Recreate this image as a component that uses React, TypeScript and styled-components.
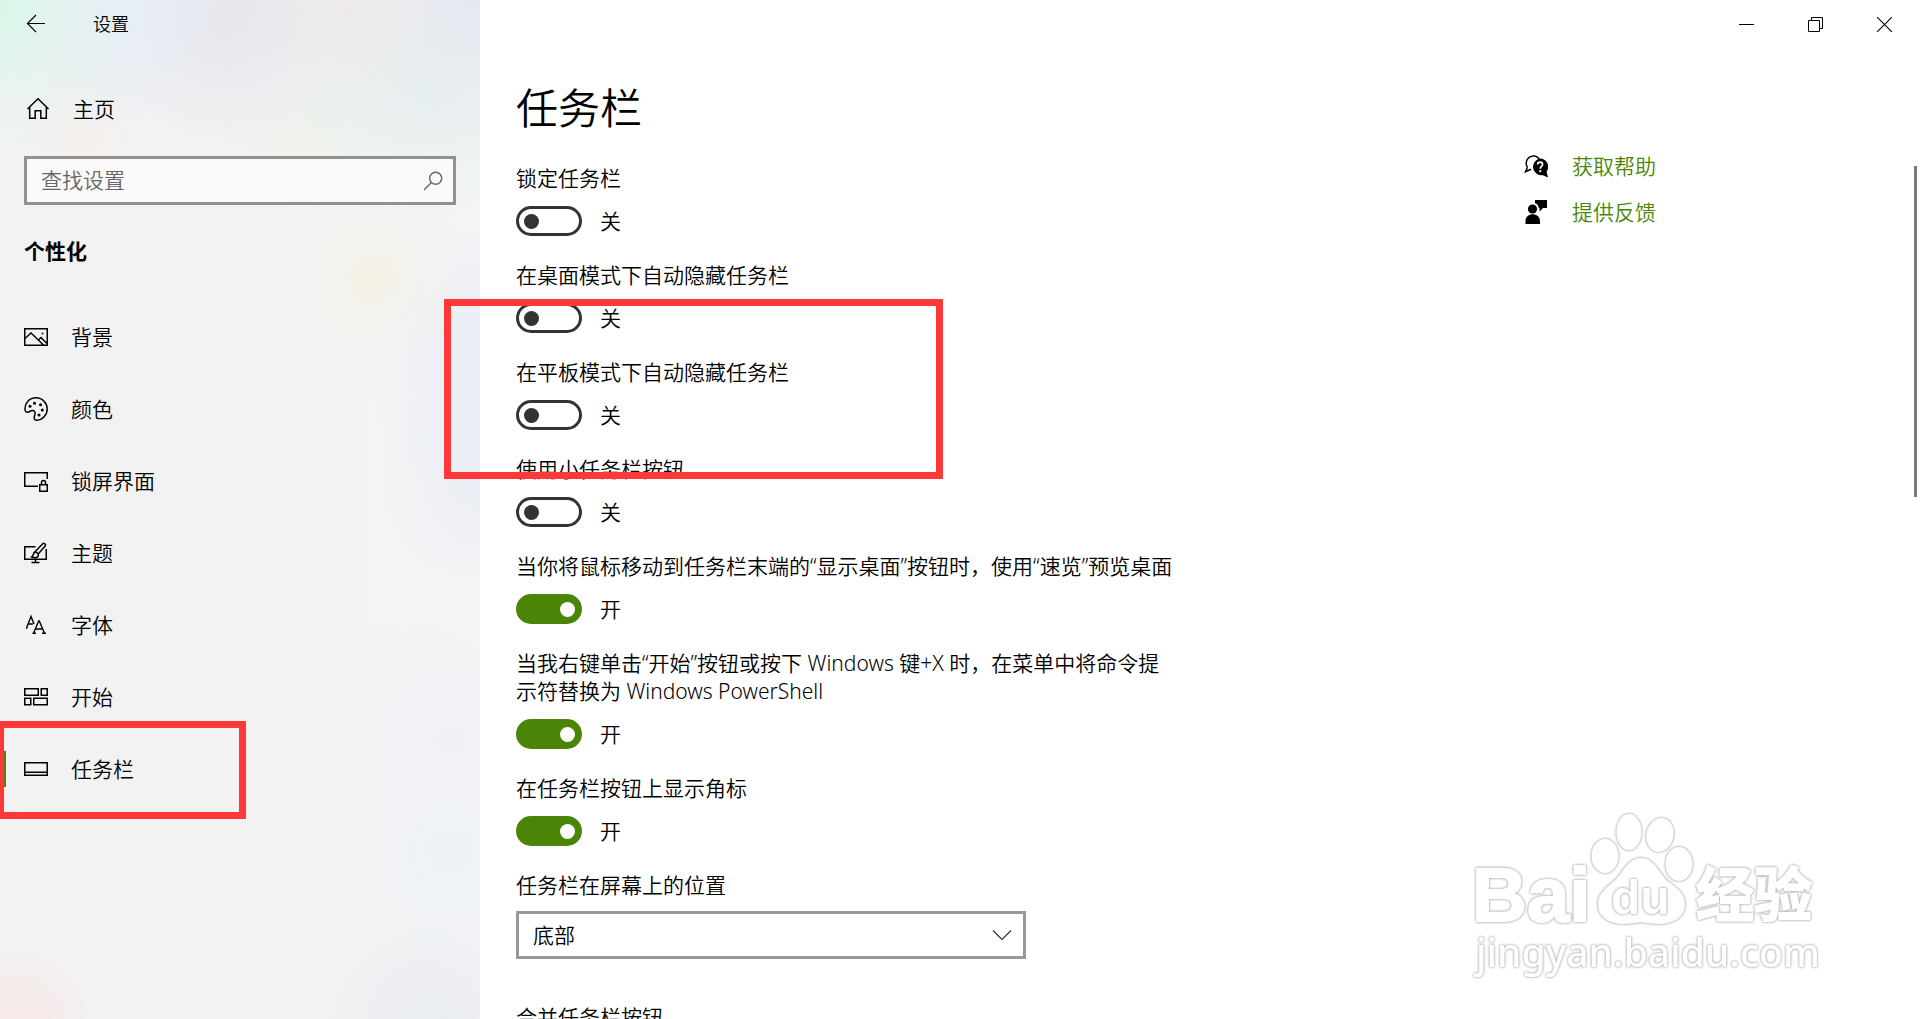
import React, { useState } from "react";
import styled, { createGlobalStyle } from "styled-components";

const GlobalStyle = createGlobalStyle`
  *, *::before, *::after { box-sizing: border-box; }
  body {
    margin: 0;
    overflow: hidden;
    background: #fff;
    color: #000;
    font-family: "Noto Sans", "Open Sans", "Noto Sans CJK SC", sans-serif;
    font-size: 21px;
    line-height: 28px;
    font-weight: 350;
  }
  button, input, select { font: inherit; color: inherit; }
`;

const Window = styled.div`
  position: relative;
  display: flex;
  height: 100vh;
  overflow: hidden;
`;

const Sidebar = styled.aside`
  flex: none;
  width: 480px;
  background:
    radial-gradient(circle at 0 10px, #d9f6e8 0, #e4f5ed88 80px, #dcf5e900 160px),
    radial-gradient(circle at 110px 10px, #e6ebf9 0, #e6eaf900 120px),
    radial-gradient(circle at 215px 20px, #e5e6ebcc 0, #e4e5eb00 120px),
    radial-gradient(circle at 345px 10px, #ede9e9 0, #efe9e900 100px),
    radial-gradient(circle at 470px 0, #e4e8f0 0, #e4e8f000 160px),
    radial-gradient(circle at 420px 80px, #e7f0ee 0, #e7f0ee00 150px),
    radial-gradient(circle at 260px 0, #e9ebf0 0, #e9ebf000 160px),
    radial-gradient(circle at 80px 140px, #f6efeccc 0, #f7efeb00 70px),
    radial-gradient(circle at 310px 135px, #f0f3e8cc 0, #f0f3e800 80px),
    radial-gradient(circle at 372px 278px, #f4f0e1 0, #f3f1e988 35px, #f5f0e000 100px),
    radial-gradient(ellipse at 480px 360px, #e9edf7 0, #e9edf600 110px),
    radial-gradient(ellipse at 480px 480px, #ebeef5 0, #e9edf500 100px),
    radial-gradient(circle at 450px 740px, #eff1f5 0, #eef0f500 140px),
    radial-gradient(circle at 450px 850px, #edf1f6 0, #ecf0f600 110px),
    radial-gradient(circle at 430px 1019px, #e9ecf1 0, #e9ecf100 120px),
    radial-gradient(circle at 20px 1019px, #f8e8e8 0, #f8e8e800 80px),
    linear-gradient(90deg, #f2f2f2 240px, #f3f4f5);
`;

const TitleRow = styled.header`
  display: flex;
  align-items: center;
  gap: 45px;
  height: 48px;
  padding-left: 24px;
  font-size: 18px;
`;

const IconButton = styled.button`
  display: flex;
  align-items: center;
  justify-content: center;
  padding: 0;
  border: 0;
  background: none;
`;

const HomeLink = styled.a`
  display: flex;
  align-items: center;
  gap: 23px;
  margin-top: 36px;
  height: 50px;
  padding-left: 26px;
  color: inherit;
  text-decoration: none;
`;

const SearchBox = styled.label`
  display: flex;
  align-items: center;
  height: 49px;
  margin: 22px 24px 0;
  padding: 0 10px 0 14px;
  border: 3px solid #919191;
  background: #ffffff99;
`;

const SearchInput = styled.input`
  flex: 1;
  min-width: 0;
  padding: 0 0 2px;
  border: 0;
  outline: 0;
  background: none;
  &::placeholder { color: #666; opacity: 1; }
`;

const SectionTitle = styled.h2`
  margin: 32px 0 36px 24px;
  font-size: 21px;
  line-height: 28px;
  font-weight: 700;
`;

const NavItem = styled.a<{ $active?: boolean }>`
  display: flex;
  align-items: center;
  gap: 23px;
  height: 72px;
  padding-left: 18px;
  border-left: 6px solid transparent;
  border-image: ${(p) =>
    p.$active
      ? "linear-gradient(transparent 18px, #4a8508 18px 54px, transparent 54px) 0 0 0 6"
      : "none"};
  color: inherit;
  text-decoration: none;
`;

const Main = styled.main`
  flex: 1;
  min-width: 0;
  display: flex;
  flex-direction: column;
`;

const Caption = styled.div`
  flex: none;
  display: flex;
  justify-content: flex-end;
  height: 48px;
  padding-right: 1px;
`;

const CaptionButton = styled(IconButton)`
  width: 69px;
`;

const Columns = styled.div`
  display: flex;
  justify-content: space-between;
  padding-left: 36px;
`;

const Settings = styled.div`
  flex: 0 1 664px;
  display: flex;
  flex-direction: column;
  gap: 25px;
`;

const PageTitle = styled.h1`
  margin: 32px 0 3px;
  font-size: 42px;
  line-height: 56px;
  font-weight: inherit;
`;

const Setting = styled.div`
  display: flex;
  flex-direction: column;
  align-items: flex-start;
  gap: 14px;
`;

const SwitchRow = styled.div`
  display: flex;
  align-items: center;
  gap: 18px;
  height: 30px;
`;

const Switch = styled.input`
  appearance: none;
  display: flex;
  align-items: center;
  width: 66px;
  height: 30px;
  margin: 0;
  padding: 0 5px;
  border: 3px solid #333;
  border-radius: 15px;
  &::before {
    content: "";
    width: 15px;
    height: 15px;
    border-radius: 50%;
    background: #333;
  }
  &:checked {
    justify-content: flex-end;
    padding: 0 4px;
    border-color: #4a8508;
    background: #4a8508;
  }
  &:checked::before { background: #fff; }
`;

const SelectSetting = styled(Setting)`
  gap: 12px;
  margin-bottom: 19px;
`;

const SelectBox = styled.div`
  display: grid;
  align-items: center;
  width: 510px;
  max-width: 100%;
  & > * { grid-area: 1 / 1; }
  & > svg { justify-self: end; margin-right: 14px; pointer-events: none; }
`;

const Select = styled.select`
  appearance: none;
  width: 100%;
  height: 48px;
  padding: 0 48px 0 14px;
  border: 3px solid #999;
  border-radius: 0;
  background: #fff;
`;

const HelpLinks = styled.nav`
  flex: none;
  width: 396px;
  display: flex;
  flex-direction: column;
  gap: 18px;
  padding-top: 104px;
`;

const HelpLink = styled.a`
  display: flex;
  align-items: center;
  gap: 24px;
  color: #4a8508;
  text-decoration: none;
`;

const ScrollThumb = styled.div`
  position: absolute;
  top: 166px;
  right: 3px;
  width: 3px;
  height: 331px;
  background: #7a7a7a;
`;

const Highlight = styled.div<{ $x: number; $y: number; $w: number; $h: number }>`
  position: absolute;
  left: ${(p) => p.$x}px;
  top: ${(p) => p.$y}px;
  width: ${(p) => p.$w}px;
  height: ${(p) => p.$h}px;
  border: 7px solid #fc3838;
  pointer-events: none;
`;

const Watermark = styled.svg`
  position: absolute;
  right: 80px;
  bottom: 29px;
  overflow: visible;
  pointer-events: none;
  font-family: "Noto Sans", "Noto Sans CJK SC", sans-serif;
  font-weight: 700;
  & > * { filter: drop-shadow(0 0 1px #aaa) drop-shadow(0 0 1px #ccc); }
`;

const Glyph = ({ size = 24, w = 1.5, children }: { size?: number; w?: number; children: React.ReactNode }) => (
  <svg width={size} height={size} viewBox={`0 0 ${size} ${size}`} fill="none" stroke="#000" strokeWidth={w} aria-hidden="true">
    {children}
  </svg>
);

const icons = {
  picture: (
    <Glyph>
      <path d="M.75 3.750h22.500v16.500H.75zM1 13.500l6-5.500 12.500 12M14 15.500l3-3 6 6" />
      <circle cx="18.500" cy="8.500" r=".9" fill="#000" stroke="none" />
    </Glyph>
  ),
  palette: (
    <Glyph>
      <path d="M1 12.500C.5 6 5.500.8 12 .8S23.200 6 23.200 12 18.500 23.200 13 23.200c-2 0-3-1-2.800-3 .3-2 1.300-3 .8-4.800-.6-2-3-2.600-4.800-1.200C4.500 15.600 1.200 16 1 12.500z" />
      <g fill="#000" stroke="none">
        <circle cx="6" cy="9.300" r="1.500" /><circle cx="10.500" cy="6.200" r="1.500" /><circle cx="16.500" cy="7.700" r="1.500" /><circle cx="18.300" cy="13" r="1.500" /><circle cx="15" cy="18" r="1.500" />
      </g>
    </Glyph>
  ),
  lock: (
    <Glyph>
      <path d="M14 17.250H.75V3.750h22.500V10M15.750 15.750h7.500v6.500h-7.500zM17.500 15.500v-2a2 2 0 0 1 4 0v2" />
    </Glyph>
  ),
  theme: (
    <Glyph>
      <path d="M11.500 5.750H.75v12.500h21.500V8M11.500 18v3.500M7.500 21.500h8" />
      <path d="M11.300 10.500L18.700 2.800c1.300-1.400 3.700.8 2.500 2.200L14.200 13M11.300 10.500l2.900 2.500c.8 3-2.200 4.700-6.400 3 2-.8 1-4.300 3.500-5.500z" />
    </Glyph>
  ),
  font: (
    <Glyph w={1.4}>
      <path d="M2.500 15L7 3.500l3 7.500M4.200 11h4.600M2 15h1.500" />
      <path d="M9.500 20.200L14.700 8h.6l5.200 12.200M11.200 16h7.200M8.500 20.300h3.500M18 20.300h4" />
    </Glyph>
  ),
  start: (
    <Glyph>
      <path d="M.75 3.750h13.500v6.500H.75zM17.250 3.750h6v6.500h-6zM.75 13.250h6v6.500h-6zM9.750 13.250h13.500v6.500H9.750z" />
    </Glyph>
  ),
  taskbar: (
    <Glyph>
      <path d="M.75 5.750h22.500v12.500H.75zM1 15.250h22" />
    </Glyph>
  ),
};

const navItems: [keyof typeof icons, string][] = [
  ["picture", "背景"],
  ["palette", "颜色"],
  ["lock", "锁屏界面"],
  ["theme", "主题"],
  ["font", "字体"],
  ["start", "开始"],
  ["taskbar", "任务栏"],
];

const switches: [string, boolean][] = [
  ["锁定任务栏", false],
  ["在桌面模式下自动隐藏任务栏", false],
  ["在平板模式下自动隐藏任务栏", false],
  ["使用小任务栏按钮", false],
  ["当你将鼠标移动到任务栏末端的“显示桌面”按钮时，使用“速览”预览桌面", true],
  ["当我右键单击“开始”按钮或按下 Windows 键+X 时，在菜单中将命令提示符替换为 Windows PowerShell", true],
  ["在任务栏按钮上显示角标", true],
];

function SwitchSetting({ id, label, initial }: { id: string; label: string; initial: boolean }) {
  const [on, setOn] = useState(initial);
  return (
    <Setting>
      <label htmlFor={id}>{label}</label>
      <SwitchRow>
        <Switch id={id} type="checkbox" role="switch" checked={on} onChange={() => setOn(!on)} />
        <span>{on ? "开" : "关"}</span>
      </SwitchRow>
    </Setting>
  );
}

export default function App() {
  return (
    <Window>
      <GlobalStyle />
      <Sidebar>
        <TitleRow>
          <IconButton aria-label="返回">
            <Glyph w={1.2}><path d="M21 11.500H3.500M12 3L3.500 11.500 12 20" /></Glyph>
          </IconButton>
          <span>设置</span>
        </TitleRow>
        <HomeLink href="#home">
          <Glyph><path d="M1.500 12L12 1.800 22.500 12M3.700 10.500v10.700h5.500v-7.500h5.600v7.500h5.500V10.500" /></Glyph>
          主页
        </HomeLink>
        <SearchBox>
          <SearchInput type="search" placeholder="查找设置" aria-label="查找设置" />
          <svg width="20" height="20" viewBox="0 0 20 20" fill="none" stroke="#666" strokeWidth="1.400" aria-hidden="true">
            <circle cx="12.700" cy="7.300" r="6" /><path d="M8.400 11.600L1 19" />
          </svg>
        </SearchBox>
        <SectionTitle>个性化</SectionTitle>
        <nav>
          {navItems.map(([icon, label]) => (
            <NavItem key={icon} href={`#${icon}`} $active={icon === "taskbar"}>
              {icons[icon]}
              {label}
            </NavItem>
          ))}
        </nav>
      </Sidebar>
      <Main>
        <Caption>
          <CaptionButton aria-label="最小化">
            <Glyph size={15} w={1}><path d="M0 7.500h15" /></Glyph>
          </CaptionButton>
          <CaptionButton aria-label="还原">
            <Glyph size={15} w={1}><path d="M.5 3.500h11v11H.5zM3.500 3.500v-3h11v11h-3" /></Glyph>
          </CaptionButton>
          <CaptionButton aria-label="关闭">
            <Glyph size={15} w={1.100}><path d="M0 0l15 15M15 0L0 15" /></Glyph>
          </CaptionButton>
        </Caption>
        <Columns>
          <Settings>
            <PageTitle>任务栏</PageTitle>
            {switches.map(([label, on], i) => (
              <SwitchSetting key={label} id={`switch-${i}`} label={label} initial={on} />
            ))}
            <SelectSetting>
              <label htmlFor="position">任务栏在屏幕上的位置</label>
              <SelectBox>
                <Select id="position" defaultValue="底部">
                  <option>底部</option>
                </Select>
                <svg width="20" height="12" viewBox="0 0 20 12" fill="none" stroke="#333" strokeWidth="1.200" aria-hidden="true">
                  <path d="M1 1.500l9 9 9-9" />
                </svg>
              </SelectBox>
            </SelectSetting>
            <Setting>合并任务栏按钮</Setting>
          </Settings>
          <HelpLinks>
            <HelpLink href="#help">
              <svg width="24" height="24" viewBox="0 0 24 24" aria-hidden="true">
                <path d="M3.500 13.400A7 7 0 1 1 15.200 5M3.500 13.200L1.500 17.800l5.500-2.600" fill="none" stroke="#000" strokeWidth="1.500" />
                <path d="M16 4.500a8.200 8.200 0 0 1 6.600 13l1.400 6-5-2.300A8.200 8.200 0 1 1 16 4.500z" />
                <path d="M13.600 10.600c0-3.400 5-3.200 5-.2 0 2-2.400 2-2.400 4.300" fill="none" stroke="#fff" strokeWidth="1.600" />
                <circle cx="16.200" cy="17.200" r="1.100" fill="#fff" />
              </svg>
              获取帮助
            </HelpLink>
            <HelpLink href="#feedback">
              <svg width="24" height="24" viewBox="0 0 24 24" aria-hidden="true">
                <circle cx="8.500" cy="9" r="4.600" />
                <path d="M1.500 24v-3c0-9 14.500-9 14.500 0v3zM11 0h12v8h-4l-3.500 3.500V8l-1-.5C14.500 5.500 13 3.800 11 3.300z" />
              </svg>
              提供反馈
            </HelpLink>
          </HelpLinks>
        </Columns>
      </Main>
      <ScrollThumb />
      <Highlight $x={444} $y={299} $w={499} $h={180} />
      <Highlight $x={-3} $y={721} $w={249} $h={98} />
      <Watermark width="400" height="200" viewBox="0 0 400 200" fill="#fff" aria-hidden="true">
        <g>
          <ellipse cx="165" cy="66" rx="13.500" ry="17" />
          <ellipse cx="189" cy="42" rx="12.500" ry="18" />
          <ellipse cx="220" cy="45" rx="13.500" ry="17" transform="rotate(12 220 45)" />
          <ellipse cx="239" cy="74" rx="13.500" ry="17" />
          <path d="M201 68c14 0 18 16 28 24 10 7 16 13 16 22 0 16-16 24-44 18-27 6-43-2-43-18 0-9 6-15 15-22 10-8 14-24 28-24z" />
        </g>
        <text x="32" y="131" fontSize="76" fontFamily="Liberation Sans, sans-serif" stroke="#fff" strokeWidth="2">Bai</text>
        <text x="171" y="124" fontSize="48" fontFamily="Liberation Sans, sans-serif">du</text>
        <text x="256" y="126" fontSize="58" stroke="#fff" strokeWidth="2">经验</text>
        <text x="36" y="177" fontSize="39" fontWeight="500">jingyan.baidu.com</text>
      </Watermark>
    </Window>
  );
}
